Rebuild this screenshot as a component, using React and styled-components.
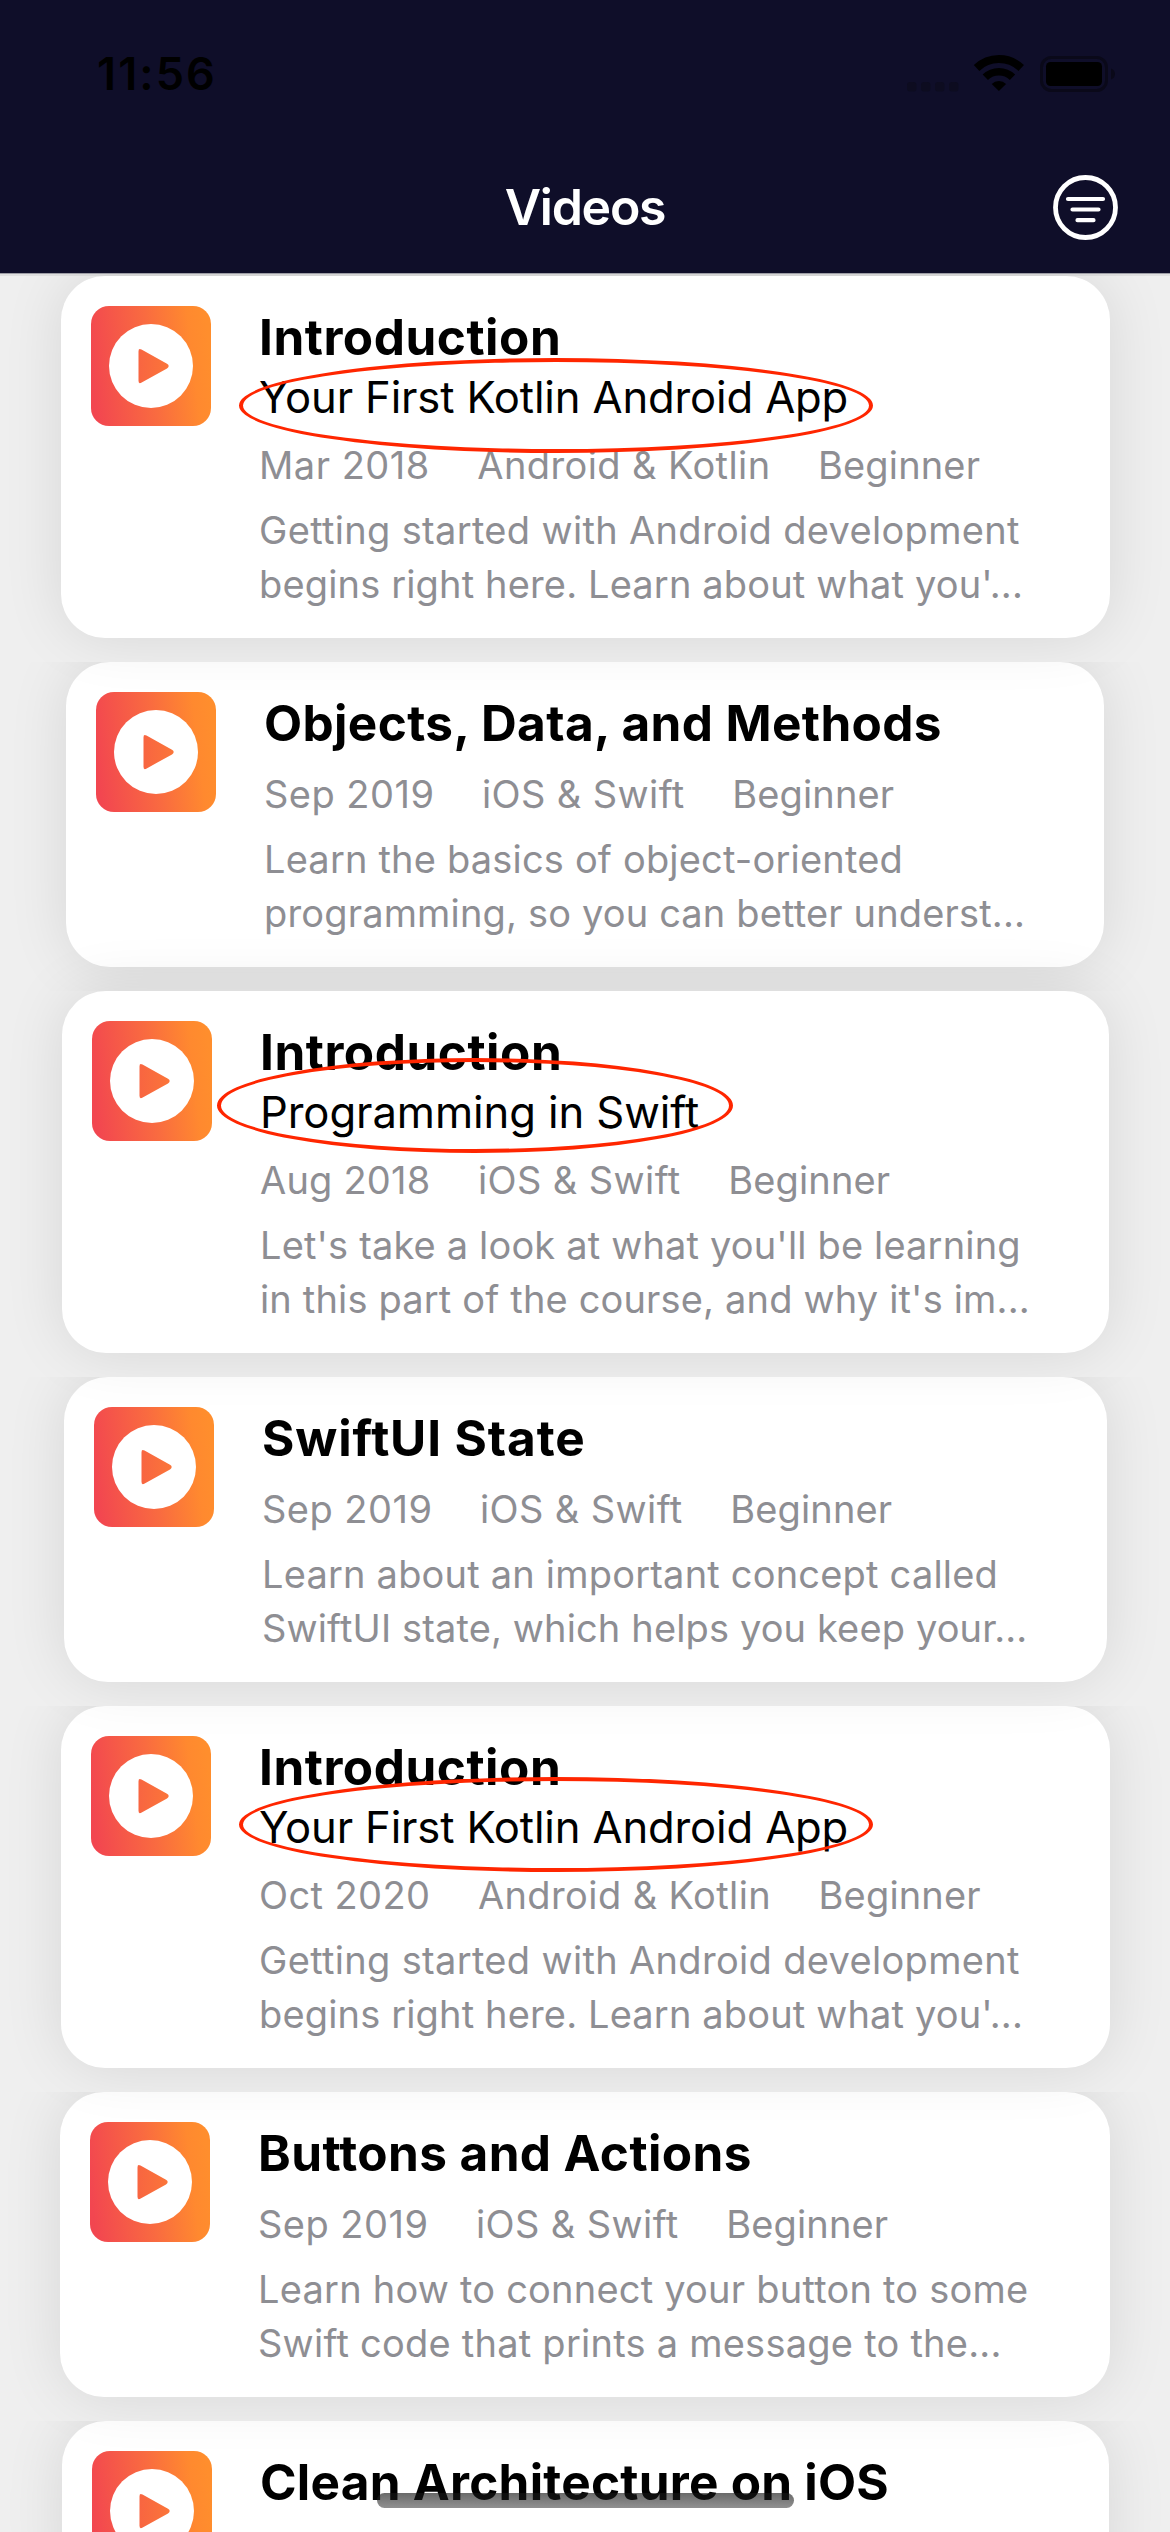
import React from "react";
import styled, { createGlobalStyle } from "styled-components";

const GlobalStyle = createGlobalStyle`
  *, *::before, *::after { box-sizing: border-box; }
  body {
    margin: 0;
    background: #efefef;
    font-family: Inter, "Liberation Sans", sans-serif;
  }
  h1, h2, p { margin: 0; }
`;

const Screen = styled.div`
  position: relative;
  display: flex;
  flex-direction: column;
  width: 1170px;
  height: 2532px;
  overflow: hidden;
  background: #efefef;
`;

const Header = styled.header`
  flex: none;
  position: relative;
  z-index: 20;
  height: 274px;
  background: #0f0e29;
  border-bottom: 1px solid #9d9da5;
`;

const StatusBar = styled.div`
  display: flex;
  justify-content: space-between;
  align-items: flex-start;
  height: 141px;
  padding: 44px 54px 0 97px;
`;

const Clock = styled.span`
  color: #000;
  font-size: 45px;
  line-height: 60px;
  font-weight: 600;
  letter-spacing: 2.1px;
`;

const StatusIcons = styled.svg`
  display: block;
  width: 210px;
  height: 60px;
`;

const NavBar = styled.div`
  display: grid;
  grid-template-columns: 1fr auto 1fr;
  align-items: center;
  height: 132px;
  padding: 0 52px;
`;

const NavTitle = styled.h1`
  grid-column: 2;
  color: #fff;
  font-size: 50px;
  line-height: 60px;
  font-weight: 600;
  letter-spacing: -1.25px;
`;

const FilterButton = styled.button`
  justify-self: end;
  display: block;
  width: 65px;
  height: 65px;
  padding: 0;
  border: 0;
  background: none;

  svg { display: block; }
`;

const List = styled.main`
  display: flex;
  flex-direction: column;
  padding-top: 2px;
  background: #e0e0e0;
`;

const Row = styled.section`
  flex: none;
  position: relative;
  z-index: ${(p) => p.$level};
  background: #efefef;
  padding: 0 ${(p) => p.$inset[1]}px 24px ${(p) => p.$inset[0]}px;
`;

const Card = styled.article`
  display: flex;
  gap: 48px;
  padding: 30px 0 27px 30px;
  background: #fff;
  border-radius: 44px;
  box-shadow: 0 0 60px rgba(0, 0, 0, 0.1);
`;

const Artwork = styled.svg`
  flex: none;
  display: block;
  width: 120px;
  height: 120px;
`;

const Body = styled.div`
  display: flex;
  flex-direction: column;
  padding-top: 1px;
  white-space: nowrap;
`;

const Title = styled.h2`
  color: #000;
  font-size: 49.5px;
  line-height: 60px;
  font-weight: 700;
  letter-spacing: ${(p) => p.$track}px;
`;

const Subtitle = styled.p`
  position: relative;
  margin-top: 4px;
  margin-bottom: -1px;
  color: #000;
  font-size: 43.6px;
  line-height: 54px;
  letter-spacing: ${(p) => p.$track}px;
`;

const Ring = styled.span`
  position: absolute;
  left: ${(p) => p.$x}px;
  top: ${(p) => p.$y}px;
  width: ${(p) => p.$w}px;
  height: 95px;
  border: 4px solid #ff2600;
  border-radius: 50%;
`;

const Meta = styled.div`
  display: flex;
  gap: 47.5px;
  margin-top: 17px;
  color: #8e8e93;
  font-size: 38px;
  line-height: 48px;
`;

const MetaItem = styled.span`
  letter-spacing: ${(p) => p.$track}px;
`;

const Description = styled.div`
  margin-top: 14px;
  color: #8e8e93;
  font-size: 38px;
  line-height: 54px;
`;

const Line = styled.p`
  letter-spacing: ${(p) => p.$track}px;
`;

const HomeIndicator = styled.div`
  position: absolute;
  z-index: 30;
  left: 377px;
  top: 2493px;
  width: 417px;
  height: 15px;
  border-radius: 7.5px;
  background: linear-gradient(rgba(22, 22, 22, 0.64), rgba(34, 34, 34, 0.5));
`;

const date = (text, track) => ({ text, track });
const iosSwift = { text: "iOS & Swift", track: 0.4 };
const androidKotlin = { text: "Android & Kotlin", track: 0.4 };
const beginner = { text: "Beginner", track: 0.15 };

const kotlinLines = [
  { text: "Getting started with Android development", track: 0.33 },
  { text: "begins right here. Learn about what you'...", track: 0.15 },
];

const videos = [
  {
    title: "Introduction",
    track: 0.52,
    inset: [61, 60],
    subtitle: "Your First Kotlin Android App",
    subtitleTrack: -0.15,
    ring: { x: -20, y: -13, w: 634 },
    meta: [date("Mar 2018", 0.5), androidKotlin, beginner],
    lines: kotlinLines,
  },
  {
    title: "Objects, Data, and Methods",
    track: 0.37,
    inset: [66, 66],
    meta: [date("Sep 2019", 0.47), iosSwift, beginner],
    lines: [
      { text: "Learn the basics of object-oriented", track: 0.18 },
      { text: "programming, so you can better underst...", track: 0.16 },
    ],
  },
  {
    title: "Introduction",
    track: 0.52,
    inset: [62, 61],
    subtitle: "Programming in Swift",
    subtitleTrack: -0.08,
    ring: { x: -43.5, y: -28, w: 516 },
    meta: [date("Aug 2018", 0.2), iosSwift, beginner],
    lines: [
      { text: "Let's take a look at what you'll be learning", track: 0.16 },
      { text: "in this part of the course, and why it's im...", track: 0.16 },
    ],
  },
  {
    title: "SwiftUI State",
    track: 0.87,
    inset: [64, 63],
    meta: [date("Sep 2019", 0.47), iosSwift, beginner],
    lines: [
      { text: "Learn about an important concept called", track: 0.2 },
      { text: "SwiftUI state, which helps you keep your...", track: 0.13 },
    ],
  },
  {
    title: "Introduction",
    track: 0.52,
    inset: [61, 60],
    subtitle: "Your First Kotlin Android App",
    subtitleTrack: -0.15,
    ring: { x: -20, y: -24, w: 634 },
    meta: [date("Oct 2020", 0.4), androidKotlin, beginner],
    lines: kotlinLines,
  },
  {
    title: "Buttons and Actions",
    track: 0.41,
    inset: [60, 60],
    meta: [date("Sep 2019", 0.47), iosSwift, beginner],
    lines: [
      { text: "Learn how to connect your button to some", track: 0.22 },
      { text: "Swift code that prints a message to the...", track: 0.24 },
    ],
  },
  {
    title: "Clean Architecture on iOS",
    track: 0.25,
    inset: [62, 61],
    meta: [],
    lines: [],
  },
];

// Stacking of the rows: a row's background hides the shadow of lower ones.
const levels = [7, 1, 6, 5, 4, 3, 2];

function PlayArtwork() {
  return (
    <Artwork viewBox="0 0 120 120" aria-hidden="true">
      <defs>
        <linearGradient id="art" x1="0" y1="0.56" x2="1" y2="0.44">
          <stop offset="0" stopColor="#f24650" />
          <stop offset="0.5" stopColor="#f96b40" />
          <stop offset="0.85" stopColor="#ff892f" />
          <stop offset="1" stopColor="#ff8e2d" />
        </linearGradient>
        <linearGradient id="playFill" x1="0" y1="0" x2="1" y2="0">
          <stop offset="0" stopColor="#f86541" />
          <stop offset="1" stopColor="#fb7539" />
        </linearGradient>
      </defs>
      <rect width="120" height="120" rx="18" fill="url(#art)" />
      <circle cx="60" cy="60" r="42" fill="#fff" />
      <path
        d="M50.5 43.6 Q47.5 41.6 47.5 45.4 V74.8 Q47.5 78.6 50.7 76.4 L76 62.4 Q79.4 60 76 57.8 Z"
        fill="url(#playFill)"
      />
    </Artwork>
  );
}

function Status() {
  return (
    <StatusIcons viewBox="906 44 210 60" aria-hidden="true">
      {[907, 921, 935, 949].map((x) => (
        <rect key={x} x={x} y="82" width="9.5" height="9.5" rx="3" fill="#0d0c20" />
      ))}
      <g fill="none" stroke="#000">
        <path d="M976.6 68 A32.2 32.2 0 0 1 1021.2 68" strokeWidth="8" />
        <path d="M985.3 77.3 A19.4 19.4 0 0 1 1012.5 77.3" strokeWidth="7.6" />
      </g>
      <path d="M998.9 91 L991.7 84 A10.2 10.2 0 0 1 1006.1 84 Z" fill="#000" />
      <rect x="1041.5" y="57.5" width="65" height="33" rx="10" fill="none" stroke="#0a0919" strokeWidth="3" />
      <rect x="1046" y="62" width="56" height="24" rx="4.5" fill="#000" />
      <path d="M1111 68.5 Q1115 70 1115 74 T1111 79.5 Z" fill="#0a0919" />
    </StatusIcons>
  );
}

function VideoRow({ video, level }) {
  return (
    <Row $level={level} $inset={video.inset}>
      <Card>
        <PlayArtwork />
        <Body>
          <Title $track={video.track}>{video.title}</Title>
          {video.subtitle && (
            <Subtitle $track={video.subtitleTrack}>
              {video.subtitle}
              <Ring $x={video.ring.x} $y={video.ring.y} $w={video.ring.w} />
            </Subtitle>
          )}
          <Meta>
            {video.meta.map((m) => (
              <MetaItem key={m.text} $track={m.track}>{m.text}</MetaItem>
            ))}
          </Meta>
          <Description>
            {video.lines.map((l) => (
              <Line key={l.text} $track={l.track}>{l.text}</Line>
            ))}
          </Description>
        </Body>
      </Card>
    </Row>
  );
}

export default function App() {
  return (
    <>
      <GlobalStyle />
      <Screen>
        <Header>
          <StatusBar>
            <Clock>11:56</Clock>
            <Status />
          </StatusBar>
          <NavBar>
            <NavTitle>Videos</NavTitle>
            <FilterButton aria-label="Filter">
              <svg width="65" height="65" viewBox="0 0 65 65" fill="none" stroke="#fff" strokeLinecap="round">
                <circle cx="32.5" cy="32.5" r="30" strokeWidth="4.8" />
                <path d="M15 24 H50 M19.5 34.5 H45.5 M24.5 45.2 H40.5" strokeWidth="4.2" />
              </svg>
            </FilterButton>
          </NavBar>
        </Header>
        <List>
          {videos.map((v, i) => (
            <VideoRow key={i} video={v} level={levels[i]} />
          ))}
        </List>
        <HomeIndicator />
      </Screen>
    </>
  );
}
